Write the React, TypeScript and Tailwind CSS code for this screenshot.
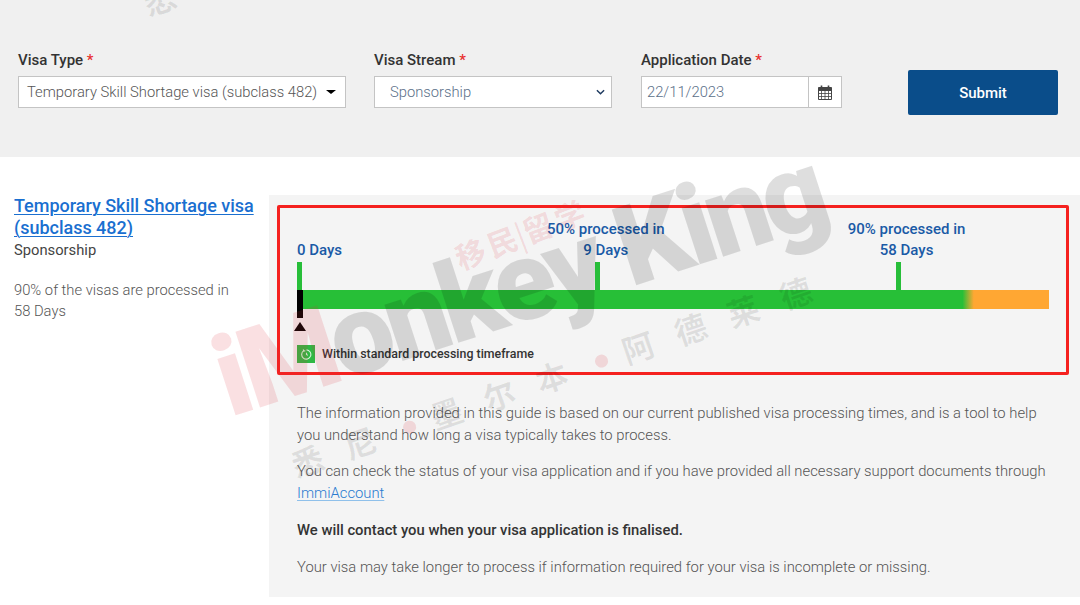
const MARKS = [
  { left: 0, top: '0 Days', bottom: '', align: 'start' },
  { left: 39.6, top: '50% processed in', bottom: '9 Days', align: 'center' },
  { left: 79.6, top: '90% processed in', bottom: '58 Days', align: 'center' },
]

function Label({ text }: { text: string }) {
  return (
    <label className="block text-[15px] leading-[18px] font-medium text-[#333] mb-2 translate-y-px">
      {text} <span className="text-[#e8312f]">*</span>
    </label>
  )
}

function SelectCaret() {
  return <span className="w-0 h-0 border-x-[5px] border-x-transparent border-t-[4px] border-t-black" />
}

function CalendarIcon() {
  return (
    <svg width="14" height="15" viewBox="0 0 14 15" fill="none" stroke="#444" strokeWidth="1">
      <path d="M.5 2.5h13v12H.5z" />
      <path d="M.5 3h13v2.5H.5z" fill="#444" />
      <path d="M3.5 .5v3M10.5 .5v3" strokeWidth="1.6" />
      <path d="M.5 8.5h13M.5 11.5h13M3.5 5.5v9M7 5.5v9M10.5 5.5v9" strokeWidth=".8" />
    </svg>
  )
}

function Watermark() {
  return (
    <div className="absolute inset-0 overflow-hidden pointer-events-none select-none">
      <div className="absolute left-[218px] top-[325px] origin-left -rotate-[18deg] whitespace-nowrap text-[112px] leading-[112px] font-black tracking-[-5px]">
        <span className="text-[#e0303c]/15">iM</span>
        <span className="text-black/[0.13]">onkey King</span>
      </div>
      <div className="absolute left-[456px] top-[238px] origin-left -rotate-[21deg] whitespace-nowrap text-[30px] leading-[40px] font-bold text-[#e0303c]/15 font-['Noto_Sans_CJK_SC',sans-serif] tracking-[4px]">
        移民<span className="font-normal mx-[-4px]">|</span>留学
      </div>
      <div className="absolute left-[292px] top-[445px] origin-left -rotate-[19deg] whitespace-nowrap text-[32px] leading-[40px] font-bold text-black/[0.09] font-['Noto_Sans_CJK_SC',sans-serif] tracking-[23.5px]">
        悉尼<span className="inline-block align-middle w-[13px] h-[13px] ml-[6px] mr-[17px] -translate-y-[3px] rounded-full bg-[#e0303c]/15" />墨尔本<span className="inline-block align-middle w-[13px] h-[13px] ml-[6px] mr-[17px] -translate-y-[3px] rounded-full bg-[#e0303c]/15" />阿德莱德
      </div>
      <div className="absolute left-[143px] -top-[22px] -rotate-[19deg] text-[32px] leading-[40px] font-bold text-black/[0.09] font-['Noto_Sans_CJK_SC',sans-serif]">
        悉
      </div>
    </div>
  )
}

export default function App() {
  return (
    <div className="relative h-[605px] overflow-hidden bg-white font-['Roboto',sans-serif]">
      {/* Search form */}
      <div className="h-[157px] bg-[#f0f0f0] pl-[18px] pt-[50px] flex items-start">
        <div className="w-[328px] mr-[28px]">
          <Label text="Visa Type" />
          <div className="h-[32px] bg-white border border-[#c4c4c4] flex items-center justify-between pl-[8px] pr-[9px] text-[14.75px] font-light text-[#555]">
            Temporary Skill Shortage visa (subclass 482)
            <SelectCaret />
          </div>
        </div>
        <div className="w-[238px] mr-[29px]">
          <Label text="Visa Stream" />
          <div className="h-[32px] bg-white border border-[#c4c4c4] flex items-center justify-between pl-[15px] pr-[6px] text-[14.75px] font-light text-[#5b7089]">
            Sponsorship
            <svg width="9" height="6" viewBox="0 0 10 6" fill="none" stroke="#1e3a5f" strokeWidth="1.6">
              <path d="M1 1l4 4 4-4" />
            </svg>
          </div>
        </div>
        <div className="w-[201px] mr-[66px]">
          <Label text="Application Date" />
          <div className="h-[32px] bg-white border border-[#c4c4c4] flex items-center text-[14.75px] font-light text-[#5b7089]">
            <span className="flex-1 pl-[5px]">22/11/2023</span>
            <span className="w-[33px] h-full border-l border-[#c4c4c4] flex items-center justify-center">
              <CalendarIcon />
            </span>
          </div>
        </div>
        <button className="w-[150px] h-[45px] mt-[20px] rounded-[2px] bg-[#0a4d8a] text-white text-[15px] font-medium pt-px">
          Submit
        </button>
      </div>

      <div className="flex pt-[38px]">
        {/* Summary */}
        <div className="w-[269px] shrink-0 pl-[14px]">
          <a className="block w-fit text-[18px] leading-[22px] font-medium tracking-[-0.02px] text-[#1a6fd0] underline underline-offset-2 decoration-1">
            Temporary Skill Shortage visa (subclass 482)
          </a>
          <div className="text-[14.75px] leading-[22px] text-[#444]">Sponsorship</div>
          <div className="mt-[19px] text-[14.75px] leading-[21px] font-light text-[#555] w-[225px]">
            90% of the visas are processed in 58 Days
          </div>
        </div>

        {/* Results */}
        <div className="flex-1 h-[402px] bg-[#f4f4f4] pl-[8px] pt-[10px] pr-[8px]">
          <div className="h-[170px] w-[792px] border-[3px] border-[#f5211f] rounded-[2px] pl-[17px] pr-[17px] pt-[12px]">
            <div className="relative h-[70px]">
              {MARKS.map((m) => (
                <div key={m.top} className="absolute top-0 bottom-0 flex flex-col" style={{ left: `${m.left}%` }}>
                  <div className={`relative h-[42px] shrink-0 ${m.align === 'center' ? 'w-0' : ''}`}>
                    <div className={`absolute bottom-[1px] whitespace-nowrap text-[15px] leading-[21px] font-medium text-[#1a5aa6] text-center ${m.align === 'center' ? 'left-[11px] -translate-x-1/2' : 'left-0'}`}>
                      {m.top}
                      {m.bottom && <div>{m.bottom}</div>}
                    </div>
                  </div>
                  <div className="w-[5px] flex-1 bg-[#27be39]" />
                </div>
              ))}
            </div>
            <div className="relative h-[19px] bg-[linear-gradient(90deg,#27bf37_0%,#27bf37_88.5%,#ffa733_90%,#ffa733_100%)]">
              <div className="absolute left-0 top-0 w-[6px] h-[28px] bg-black" />
              <div className="absolute -left-[3px] top-[32px] w-0 h-0 border-x-[6px] border-x-transparent border-b-[9px] border-b-black" />
            </div>
            <div className="mt-[36px] flex items-center gap-[7px]">
              <span className="w-[18px] h-[18px] bg-[#2fb844] flex items-center justify-center">
                <svg width="11" height="11" viewBox="0 0 12 12" fill="none" stroke="#d7f5da" strokeWidth="1.2">
                  <path d="M3 1.8A5 5 0 1 0 6 1" />
                  <path d="M2.4 .6l.7 1.6 1.6-.3" />
                  <path d="M6 4v2l1.4 1" />
                </svg>
              </span>
              <span className="text-[12.4px] font-medium text-[#333]">Within standard processing timeframe</span>
            </div>
          </div>

          <div className="pl-[20px] w-[780px] text-[14.8px] leading-[22px] font-light text-[#555]">
            <p className="mt-[27px]">
              The information provided in this guide is based on our current published visa processing times, and is a tool to help you understand how long a visa typically takes to process.
            </p>
            <p className="mt-[14px]">
              You can check the status of your visa application and if you have provided all necessary support documents through <a className="text-[#2a7bd0] underline underline-offset-2 decoration-1 decoration-[#8fc0ea]">ImmiAccount</a>
            </p>
            <p className="mt-[15px] font-medium text-[#333] text-[14.8px]">We will contact you when your visa application is finalised.</p>
            <p className="mt-[15px]">
              Your visa may take longer to process if information required for your visa is incomplete or missing.
            </p>
          </div>
        </div>
      </div>

      <Watermark />
    </div>
  )
}
